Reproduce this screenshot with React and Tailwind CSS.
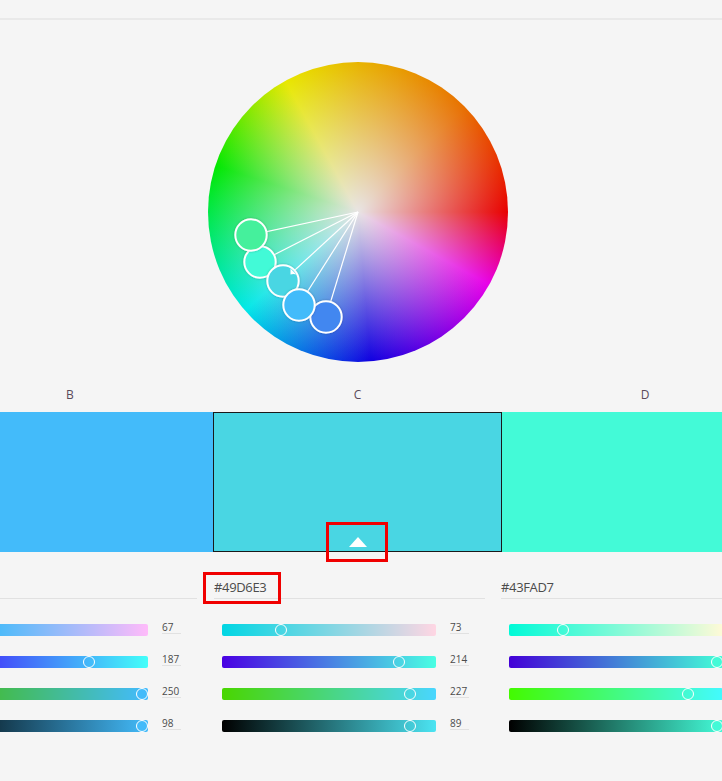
const font = { fontFamily: '"Open Sans", "Noto Sans", sans-serif' };

const handles = [
  { x: 260, y: 262, fill: "#43fad7" },
  { x: 326, y: 317, fill: "#4287f0" },
  { x: 283, y: 281, fill: "#49d6e3" },
  { x: 251, y: 235, fill: "#45f09c" },
  { x: 299, y: 305, fill: "#43bbfa" },
];

function Wheel() {
  return (
    <div className="flex justify-center pt-[42px] pr-[6px]">
      <div className="relative w-[300px] h-[300px] rounded-full bg-[conic-gradient(#e8b400_0deg,#e87000_45deg,#e80000_90deg,#e800e8_119deg,#1000e0_175deg,#00e8e8_229deg,#00e800_288deg,#e8e800_331deg,#e8b400_360deg)]">
        <div className="absolute inset-0 rounded-full bg-[radial-gradient(circle_closest-side,#e8e4e4_0%,rgba(232,228,228,0)_100%)]" />
        <svg className="absolute inset-0 overflow-visible" width={300} height={300} viewBox="208 62 300 300">
          <defs>
            <filter id="s" x="-30%" y="-30%" width="160%" height="160%">
              <feDropShadow dx="0" dy="0" stdDeviation="1" floodColor="#000" floodOpacity="0.25" />
            </filter>
          </defs>
          {handles.map((h) => (
            <line key={h.x} x1="358" y1="212" x2={h.x} y2={h.y} stroke="#fff" strokeWidth="1.2" />
          ))}
          {handles.map((h) => (
            <g key={h.fill}>
              <circle cx={h.x} cy={h.y} r="15.7" fill={h.fill} stroke="#fff" strokeWidth="2" filter="url(#s)" />
              {h.x === 283 && <path d="M290.5 268.5 L296.5 274.5 Q293.5 273.5 290.5 274.5 Z" fill="#fff" />}
            </g>
          ))}
        </svg>
      </div>
    </div>
  );
}

function Slider({ from, to, thumb, fillThumb }) {
  return (
    <div className="relative w-[214px] h-3 shrink-0 rounded-[2px]" style={{ background: `linear-gradient(to right, ${from}, ${to})` }}>
      {thumb !== null && (
        <div
          className="absolute top-0 w-3 h-3 rounded-full border-[1.5px] border-white"
          style={{ left: thumb - 6, backgroundColor: fillThumb }}
        />
      )}
    </div>
  );
}

function Column({ hex, rows, narrow }) {
  return (
    <div className={narrow ? "shrink-0 w-[287px]" : "shrink-0 w-[288px]"}>
      <div className="ml-px h-[21px] border-b border-[#e1e1e1] text-[13px] leading-[20px] tracking-[-0.35px] text-[#4b4b4b] pt-[2px] box-content w-[271px]" style={font}>
        {hex}
      </div>
      <div className="mt-[25px] ml-[9px] flex flex-col gap-5">
        {rows.map((r, i) => (
          <div key={i} className="flex items-start gap-[14px]">
            <Slider {...r} />
            {r.value !== undefined && (
              <div className="w-[19px] h-[13px] -mt-[4px] box-content border-b border-[#e1e1e1] text-[10px] leading-[14px] text-[#4b4b4b]" style={font}>
                {r.value}
              </div>
            )}
          </div>
        ))}
      </div>
    </div>
  );
}

const colB = [
  { from: "#00bbfa", to: "#ffbbfa", thumb: null, value: 67 },
  { from: "#4300fa", to: "#43fffa", thumb: 155, value: 187 },
  { from: "#43bb00", to: "#43bbff", thumb: 208, value: 250, fillThumb: "#43bbfa" },
  { from: "#000000", to: "#43bbfa", thumb: 208, value: 98, fillThumb: "#43bbfa" },
];
const colC = [
  { from: "#00d6e3", to: "#ffd6e3", thumb: 59, value: 73 },
  { from: "#4900e3", to: "#49ffe3", thumb: 177, value: 214 },
  { from: "#49d600", to: "#49d6ff", thumb: 188, value: 227 },
  { from: "#000000", to: "#4be4f2", thumb: 188, value: 89 },
];
const colD = [
  { from: "#00fad7", to: "#fffad7", thumb: 54 },
  { from: "#4300d7", to: "#43ffd7", thumb: 208, fillThumb: "#43fad7" },
  { from: "#43fa00", to: "#43faff", thumb: 179 },
  { from: "#000000", to: "#43fad7", thumb: 208, fillThumb: "#43fad7" },
];

export default function App() {
  return (
    <div className="relative w-[722px] h-[781px] overflow-hidden bg-[#f5f5f5]" style={font}>
      <div className="h-5 border-b-2 border-[#e9e9e9]" />
      <Wheel />

      <div className="flex h-[50px] pt-[26px] text-[12px] leading-[14px] text-[#5a4a5a]">
        <div className="w-[140px] text-center">B</div>
        <div className="w-[435px] text-center">C</div>
        <div className="w-[140px] text-center">D</div>
      </div>

      <div className="flex h-[140px]">
        <div className="w-[213px] bg-[#43bbfa]" />
        <div className="relative w-[289px] bg-[#49d6e3] border border-[#1a1a1a]">
          <div className="absolute left-[135px] bottom-[4px] w-0 h-0 border-x-[9px] border-x-transparent border-b-[10px] border-b-white" />
          <div className="absolute left-[112px] -bottom-[11px] w-[62px] h-[40px] border-[3px] border-[#f00000]" />
        </div>
        <div className="flex-1 bg-[#43fad7]" />
      </div>

      <div className="flex -ml-[75px] w-[900px] pt-[23px]">
        <Column hex="" rows={colB} />
        <Column hex="#49D6E3" rows={colC} narrow />
        <Column hex="#43FAD7" rows={colD} />
      </div>

      <div className="absolute left-[203px] top-[572px] w-[78px] h-[32px] border-[3px] border-[#f00000]" />
    </div>
  );
}
